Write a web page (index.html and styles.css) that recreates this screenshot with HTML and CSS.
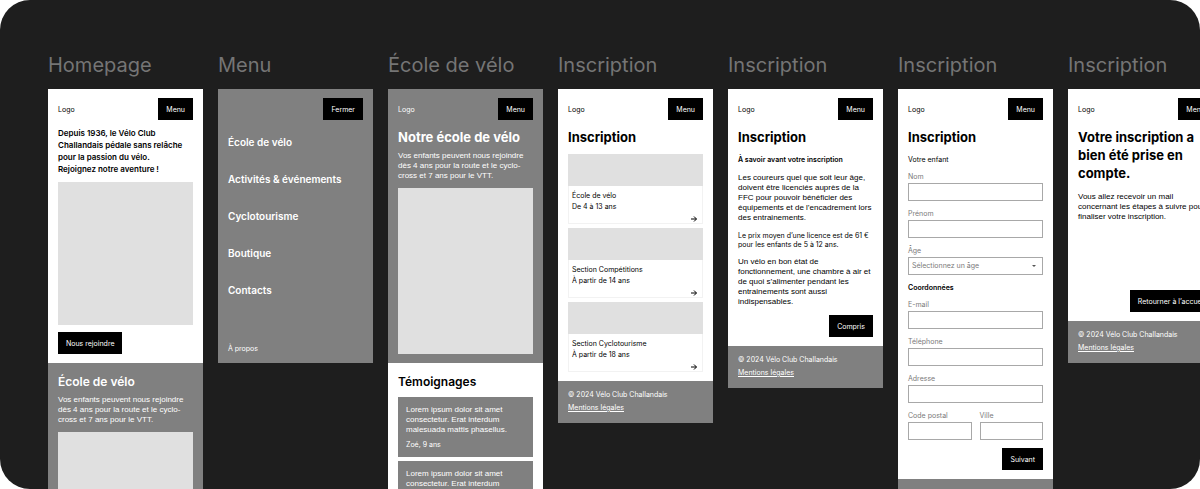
FILE: index.html
```
<!DOCTYPE html>
<html lang="fr">
<head>
    <meta charset="UTF-8">
    <title>Vélo Club Challandais - Wireframes</title>
    <meta name="viewport" content="width=device-width, initial-scale=1.0">
    <link rel="stylesheet" href="styles.css">
</head>
<body>
    <main class="board">
        <!-- Homepage -->
        <section class="frame">
            <h2 class="frame-title">Homepage</h2>
            <div class="screen">
                <div class="block">
                    <header class="topbar">
                        <span>Logo</span>
                        <button class="btn" type="button">Menu</button>
                    </header>
                    <p class="intro">Depuis 1936, le Vélo Club<br>Challandais pédale sans relâche<br>pour la passion du vélo.<br>Rejoignez notre aventure !</p>
                    <div class="picture picture-home"></div>
                    <button class="btn" type="button">Nous rejoindre</button>
                </div>
                <div class="block block-next grey">
                    <h3 class="subtitle">École de vélo</h3>
                    <p class="lead">Vos enfants peuvent nous rejoindre<br>dès 4 ans pour la route et le cyclo-<br>cross et 7 ans pour le VTT.</p>
                    <div class="picture picture-home"></div>
                </div>
            </div>
        </section>

        <!-- Menu -->
        <section class="frame">
            <h2 class="frame-title">Menu</h2>
            <div class="screen screen-short grey">
                <div class="block block-fill">
                    <header class="topbar topbar-end">
                        <button class="btn" type="button">Fermer</button>
                    </header>
                    <nav class="menu">
                        <a href="#">École de vélo</a>
                        <a href="#">Activités &amp; événements</a>
                        <a href="#">Cyclotourisme</a>
                        <a href="#">Boutique</a>
                        <a href="#">Contacts</a>
                    </nav>
                    <a class="about" href="#">À propos</a>
                </div>
            </div>
        </section>

        <!-- École de vélo -->
        <section class="frame">
            <h2 class="frame-title">École de vélo</h2>
            <div class="screen">
                <div class="block grey">
                    <header class="topbar">
                        <span>Logo</span>
                        <button class="btn" type="button">Menu</button>
                    </header>
                    <h1 class="title">Notre école de vélo</h1>
                    <p class="lead">Vos enfants peuvent nous rejoindre<br>dès 4 ans pour la route et le cyclo-<br>cross et 7 ans pour le VTT.</p>
                    <div class="picture picture-school"></div>
                </div>
                <div class="block block-next">
                    <h3 class="subtitle">Témoignages</h3>
                    <div class="quotes">
                        <blockquote class="quote grey">
                            <p>Lorem ipsum dolor sit amet<br>consectetur. Erat interdum<br>malesuada mattis phasellus.</p>
                            <cite>Zoé, 9 ans</cite>
                        </blockquote>
                        <blockquote class="quote grey">
                            <p>Lorem ipsum dolor sit amet<br>consectetur. Erat interdum</p>
                        </blockquote>
                    </div>
                </div>
            </div>
        </section>

        <!-- Inscription : choix de la section -->
        <section class="frame">
            <h2 class="frame-title">Inscription</h2>
            <div class="screen">
                <div class="block">
                    <header class="topbar">
                        <span>Logo</span>
                        <button class="btn" type="button">Menu</button>
                    </header>
                    <h1 class="title">Inscription</h1>
                    <div class="cards">
                        <a class="card" href="#">
                            <span class="card-picture"></span>
                            <span class="card-name">École de vélo</span>
                            <span class="card-age">De 4 à 13 ans</span>
                            <svg class="arrow" viewBox="0 0 6 6"><path d="M0 3h5.4M3 .5 5.5 3 3 5.5"/></svg>
                        </a>
                        <a class="card" href="#">
                            <span class="card-picture"></span>
                            <span class="card-name">Section Compétitions</span>
                            <span class="card-age">À partir de 14 ans</span>
                            <svg class="arrow" viewBox="0 0 6 6"><path d="M0 3h5.4M3 .5 5.5 3 3 5.5"/></svg>
                        </a>
                        <a class="card" href="#">
                            <span class="card-picture"></span>
                            <span class="card-name">Section Cyclotourisme</span>
                            <span class="card-age">À partir de 18 ans</span>
                            <svg class="arrow" viewBox="0 0 6 6"><path d="M0 3h5.4M3 .5 5.5 3 3 5.5"/></svg>
                        </a>
                    </div>
                </div>
                <footer class="footer grey">
                    <span>© 2024 Vélo Club Challandais</span>
                    <a href="#">Mentions légales</a>
                </footer>
            </div>
        </section>

        <!-- Inscription : à savoir -->
        <section class="frame">
            <h2 class="frame-title">Inscription</h2>
            <div class="screen">
                <div class="block">
                    <header class="topbar">
                        <span>Logo</span>
                        <button class="btn" type="button">Menu</button>
                    </header>
                    <h1 class="title">Inscription</h1>
                    <div class="text">
                        <h3 class="strong">À savoir avant votre inscription</h3>
                        <p>Les coureurs quel que soit leur âge,<br>doivent être licenciés auprès de la<br>FFC pour pouvoir bénéficier des<br>équipements et de l’encadrement lors<br>des entrainements.</p>
                        <p class="small">Le prix moyen d’une licence est de 61 €<br>pour les enfants de 5 à 12 ans.</p>
                        <p>Un vélo en bon état de<br>fonctionnement, une chambre à air et<br>de quoi s’alimenter pendant les<br>entrainements sont aussi<br>indispensables.</p>
                    </div>
                    <button class="btn btn-right" type="button">Compris</button>
                </div>
                <footer class="footer grey">
                    <span>© 2024 Vélo Club Challandais</span>
                    <a href="#">Mentions légales</a>
                </footer>
            </div>
        </section>

        <!-- Inscription : formulaire -->
        <section class="frame">
            <h2 class="frame-title">Inscription</h2>
            <div class="screen">
                <div class="block">
                    <header class="topbar">
                        <span>Logo</span>
                        <button class="btn" type="button">Menu</button>
                    </header>
                    <h1 class="title">Inscription</h1>
                    <form class="form">
                        <h3 class="legend">Votre enfant</h3>
                        <div class="field">
                            <label for="nom">Nom</label>
                            <input id="nom" type="text">
                        </div>
                        <div class="field">
                            <label for="prenom">Prénom</label>
                            <input id="prenom" type="text">
                        </div>
                        <div class="field">
                            <label for="age">Âge</label>
                            <div class="select">
                                <select id="age">
                                    <option>Sélectionnez un âge</option>
                                </select>
                            </div>
                        </div>
                        <h3 class="legend legend-bold">Coordonnées</h3>
                        <div class="field">
                            <label for="email">E-mail</label>
                            <input id="email" type="email">
                        </div>
                        <div class="field">
                            <label for="tel">Téléphone</label>
                            <input id="tel" type="tel">
                        </div>
                        <div class="field">
                            <label for="adresse">Adresse</label>
                            <input id="adresse" type="text">
                        </div>
                        <div class="row">
                            <div class="field">
                                <label for="cp">Code postal</label>
                                <input id="cp" type="text">
                            </div>
                            <div class="field">
                                <label for="ville">Ville</label>
                                <input id="ville" type="text">
                            </div>
                        </div>
                        <button class="btn btn-right" type="button">Suivant</button>
                    </form>
                </div>
                <footer class="footer grey">
                    <span>© 2024 Vélo Club Challandais</span>
                    <a href="#">Mentions légales</a>
                </footer>
            </div>
        </section>

        <!-- Inscription : confirmation -->
        <section class="frame">
            <h2 class="frame-title">Inscription</h2>
            <div class="screen screen-short">
                <div class="block block-fill">
                    <header class="topbar">
                        <span>Logo</span>
                        <button class="btn" type="button">Menu</button>
                    </header>
                    <h1 class="title">Votre inscription a<br>bien été prise en<br>compte.</h1>
                    <p class="message">Vous allez recevoir un mail<br>concernant les étapes à suivre pour<br>finaliser votre inscription.</p>
                    <button class="btn btn-right btn-bottom" type="button">Retourner à l’accueil</button>
                </div>
                <footer class="footer grey">
                    <span>© 2024 Vélo Club Challandais</span>
                    <a href="#">Mentions légales</a>
                </footer>
            </div>
        </section>
    </main>
</body>
</html>
```
FILE: styles.css
```
:root {
    --board: #1e1e1e;
    --grey: #808080;
    --light: #e0e0e0;
    --label: #7a7a7a;
}
* {
    box-sizing: border-box;
    margin: 0;
    padding: 0;
}
body {
    background: #ffffff;
    font-family: Inter, "Liberation Sans", sans-serif;
    font-size: 7px;
    line-height: 10px;
    color: #000000;
}
a {
    color: inherit;
    text-decoration: none;
}
.board {
    display: flex;
    align-items: flex-start;
    gap: 15px;
    height: 100vh;
    padding: 53px 0 0 48px;
    background: var(--board);
    border-radius: 30px;
    overflow: hidden;
}
.frame {
    flex: 0 0 155px;
}
.frame-title {
    margin-bottom: 12px;
    font-size: 20px;
    line-height: 24px;
    font-weight: 400;
    color: #757575;
    white-space: nowrap;
}
.screen {
    background: #ffffff;
    white-space: nowrap;
}
.screen-short {
    display: flex;
    flex-direction: column;
    min-height: 274px;
}
.grey {
    background: var(--grey);
    color: #ffffff;
}
.block {
    padding: 9px 10px;
}
.block-next {
    padding-top: 11px;
}
.block-fill {
    flex: 1;
    display: flex;
    flex-direction: column;
}

/* Header */
.topbar {
    display: flex;
    justify-content: space-between;
    align-items: center;
}
.topbar-end {
    justify-content: flex-end;
}
.topbar span {
    padding-top: 2px;
}
.btn {
    display: block;
    height: 22px;
    padding: 1px 8px 0;
    border: none;
    background: #000000;
    color: #ffffff;
    font: inherit;
    cursor: pointer;
}
.btn-right {
    margin-left: auto;
}
.btn-bottom {
    margin-top: auto;
}

/* Texts */
.lead,
.message,
.quote p,
.text p {
    font-family: "Liberation Sans", Arial, sans-serif;
    font-size: 8px;
}
.intro {
    margin-top: 7px;
    font-size: 8px;
    line-height: 12px;
    font-weight: 600;
}
.title {
    margin-top: 8px;
    font-size: 13px;
    line-height: 18px;
    font-weight: 700;
}
.subtitle {
    font-size: 12px;
    line-height: 16px;
    font-weight: 600;
}
.lead {
    margin-top: 5px;
}
.message {
    margin-top: 10px;
}
.picture {
    margin: 7px 0;
    background: var(--light);
}
.picture-home {
    height: 143px;
}
.picture-school {
    height: 166px;
    margin-bottom: 0;
}

/* Menu */
.menu {
    display: flex;
    flex-direction: column;
    gap: 25px;
    margin-top: 16px;
    font-size: 10px;
    line-height: 12px;
    font-weight: 600;
}
.about {
    margin-top: auto;
}

/* Quotes */
.quotes {
    display: flex;
    flex-direction: column;
    gap: 4px;
    margin-top: 7px;
}
.quote {
    padding: 8px 8px 7px;
}
.quote cite {
    display: block;
    margin-top: 5px;
    font-style: normal;
}

/* Cards */
.cards {
    display: flex;
    flex-direction: column;
    gap: 4px;
    margin-top: 8px;
}
.card {
    display: flex;
    flex-direction: column;
    height: 70px;
    border: 1px solid #f2f2f2;
}
.card-picture {
    height: 32px;
    margin: -1px -1px 5px;
    background: var(--light);
}
.card-name,
.card-age {
    padding-left: 3px;
}
.card-age {
    margin-top: 1px;
}
.arrow {
    align-self: flex-end;
    width: 6px;
    height: 6px;
    margin: 4px 5px 0 0;
    fill: none;
    stroke: #000000;
}

/* Footer */
.footer {
    display: flex;
    flex-direction: column;
    align-items: flex-start;
    gap: 3px;
    padding: 9px 10px 10px;
}
.footer a {
    text-decoration: underline;
}

/* Information page */
.text {
    display: flex;
    flex-direction: column;
    gap: 8px;
    margin: 8px 0;
    padding-top: 1px;
}
.strong {
    font-size: 7px;
    font-weight: 600;
}
.text .small {
    font-family: inherit;
    font-size: 7px;
    line-height: 9px;
}

/* Form */
.form {
    margin-top: 9px;
}
.legend {
    margin-bottom: 7px;
    font-size: 7px;
    font-weight: 400;
}
.legend-bold {
    font-weight: 600;
}
.field {
    flex: 1;
    min-width: 0;
    margin-bottom: 8px;
}
.field label {
    display: block;
    margin-bottom: 1px;
    color: var(--label);
}
.field input,
.field select {
    display: block;
    width: 100%;
    height: 18px;
    padding: 0 3px;
    border: 1px solid #a8a8a8;
    border-radius: 0;
    background: #ffffff;
    font: inherit;
    color: var(--label);
}
.field select {
    appearance: none;
}
.select {
    position: relative;
}
.select::after {
    content: "";
    position: absolute;
    top: 8px;
    right: 7px;
    border: 2px solid transparent;
    border-top-color: #555555;
    border-bottom: 0;
}
.row {
    display: flex;
    gap: 8px;
}
```
